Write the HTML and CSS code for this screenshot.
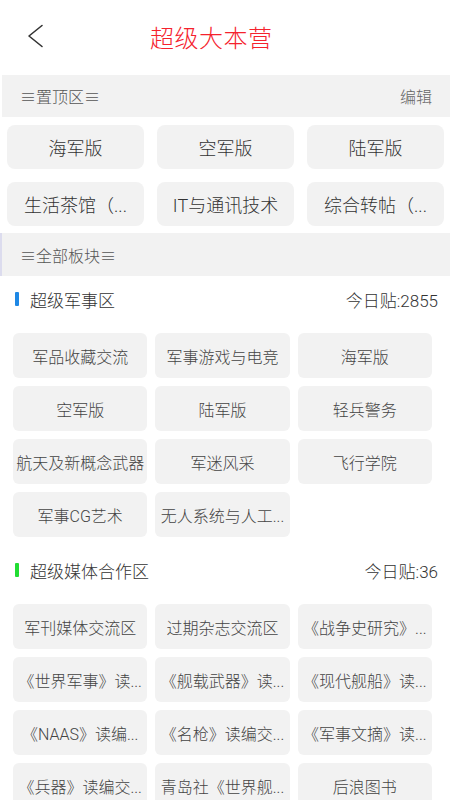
FILE: index.html
```html
<!DOCTYPE html>
<html>
<head>
<meta charset="UTF-8">
<title>超级大本营</title>
<link rel="stylesheet" href="styles.css">
</head>
<body>

<div class="header">
	<div class="back">
		<svg width="40" height="40" viewBox="0 0 40 40">
			<path d="M26 9.5 L13 20 L26 30.5" fill="none" stroke="#333" stroke-width="1.6" stroke-linecap="round" stroke-linejoin="round"/>
		</svg>
	</div>
	<div class="title">超级大本营</div>
</div>

<div class="bar">
	<span>≡置顶区≡</span>
	<span class="edit">编辑</span>
</div>

<div class="top-grid">
	<div class="top-item">海军版</div>
	<div class="top-item">空军版</div>
	<div class="top-item">陆军版</div>
	<div class="top-item">生活茶馆（...</div>
	<div class="top-item">IT与通讯技术</div>
	<div class="top-item">综合转帖（...</div>
</div>

<div class="bar bar-all">
	<span>≡全部板块≡</span>
</div>

<div class="section">
	<div class="section-head">
		<span class="mark mark-blue"></span>
		<span class="section-name">超级军事区</span>
		<span class="count">今日贴:2855</span>
	</div>
	<div class="grid">
		<div class="item">军品收藏交流</div>
		<div class="item">军事游戏与电竞</div>
		<div class="item">海军版</div>
		<div class="item">空军版</div>
		<div class="item">陆军版</div>
		<div class="item">轻兵警务</div>
		<div class="item">航天及新概念武器</div>
		<div class="item">军迷风采</div>
		<div class="item">飞行学院</div>
		<div class="item">军事CG艺术</div>
		<div class="item">无人系统与人工...</div>
	</div>
</div>

<div class="section">
	<div class="section-head">
		<span class="mark mark-green"></span>
		<span class="section-name">超级媒体合作区</span>
		<span class="count">今日贴:36</span>
	</div>
	<div class="grid">
		<div class="item">军刊媒体交流区</div>
		<div class="item">过期杂志交流区</div>
		<div class="item">《战争史研究》...</div>
		<div class="item">《世界军事》读...</div>
		<div class="item">《舰载武器》读...</div>
		<div class="item">《现代舰船》读...</div>
		<div class="item">《NAAS》读编...</div>
		<div class="item">《名枪》读编交...</div>
		<div class="item">《军事文摘》读...</div>
		<div class="item">《兵器》读编交...</div>
		<div class="item">青岛社《世界舰...</div>
		<div class="item">后浪图书</div>
	</div>
</div>

</body>
</html>
```

FILE: styles.css
```css
body
{
	margin: 0;
	background: #ffffff;
	font-family: Roboto, "Noto Sans CJK SC", sans-serif;
	font-weight: 300;
	color: #333333;
}

.header
{
	height: 75px;
	display: flex;
	align-items: center;
	padding: 0 16px;
}

.back
{
	width: 40px;
	height: 40px;
	margin-top: -3px;
}

.back svg
{
	display: block;
}

.title
{
	margin-left: 94px;
	font-size: 24px;
	color: #f5222d;
	letter-spacing: 0.5px;
	margin-top: -2px;
}

.bar
{
	margin-left: 2px;
	height: 42px;
	background-color: #f2f2f2;
	display: flex;
	align-items: center;
	justify-content: space-between;
	padding: 0 18px;
	font-size: 16px;
	color: #555555;
}

.edit
{
	font-size: 16px;
	color: #666666;
}

.bar-all
{
	height: 43px;
	box-shadow: -2px 0 0 #dcdcee;
}

.top-grid
{
	display: grid;
	grid-template-columns: repeat(3, 1fr);
	grid-auto-rows: 44px;
	gap: 13px;
	padding: 8px 6px 7px 7px;
}

.top-item
{
	background-color: #f2f2f2;
	border-radius: 8px;
	display: flex;
	align-items: center;
	justify-content: center;
	font-size: 18px;
	color: #333333;
	white-space: nowrap;
	overflow: hidden;
}

.section-head
{
	height: 46px;
	display: flex;
	align-items: center;
	padding: 0 12px 0 15px;
}

.mark
{
	width: 4px;
	height: 14px;
	border-radius: 1px;
}

.mark-blue
{
	background-color: #1e88e5;
}

.mark-green
{
	background-color: #22dd33;
}

.section-name
{
	margin-left: 11px;
	font-size: 17px;
	color: #333333;
	flex: 1;
}

.count
{
	font-size: 17px;
	color: #333333;
}

.grid
{
	display: grid;
	grid-template-columns: repeat(3, 1fr);
	grid-auto-rows: 45px;
	gap: 8px;
	padding: 11px 18px 10px 13px;
}

.item
{
	background-color: #f2f2f2;
	border-radius: 6px;
	display: flex;
	align-items: center;
	justify-content: center;
	font-size: 16px;
	color: #444444;
	white-space: nowrap;
	overflow: hidden;
}
```
